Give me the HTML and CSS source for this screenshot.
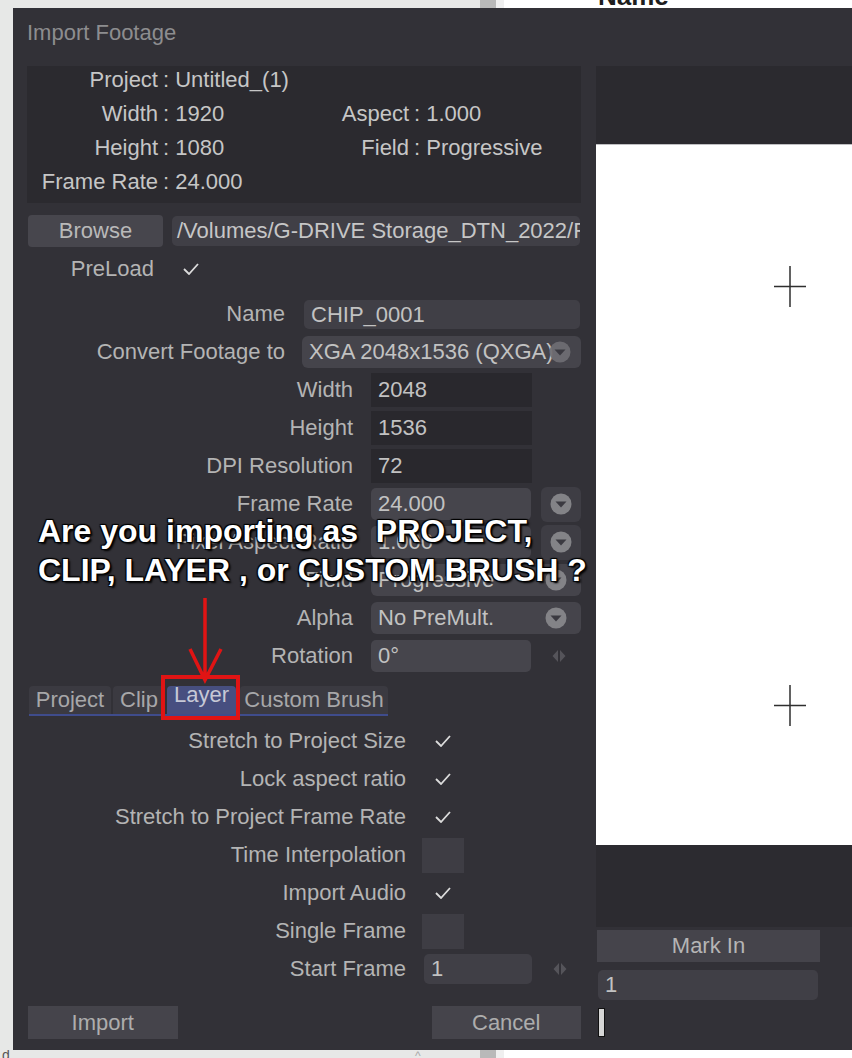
FILE: index.html
```html
<!DOCTYPE html>
<html lang="en">
<head>
    <meta charset="utf-8">
    <title>Import Footage</title>
    <link rel="stylesheet" href="styles.css">
</head>
<body>
<div class="strip">
    <div class="pane"></div>
    <div class="scroll"></div>
    <div class="gap"></div>
    <div class="doc"><span class="doc-head">Name</span></div>
</div>

<div class="middle">
    <div class="gutter"></div>
    <div class="dialog">
        <div class="titlebar">Import Footage</div>
        <div class="dialog-body">
            <div class="left-col">
                <div class="info">
                    <span class="k">Project</span><span class="v">: Untitled_(1)</span><span></span><span></span>
                    <span class="k">Width</span><span class="v">: 1920</span><span class="k">Aspect</span><span class="v">: 1.000</span>
                    <span class="k">Height</span><span class="v">: 1080</span><span class="k">Field</span><span class="v">: Progressive</span>
                    <span class="k">Frame Rate</span><span class="v">: 24.000</span><span></span><span></span>
                </div>

                <div class="browse-row">
                    <div class="btn browse">Browse</div>
                    <div class="path">/Volumes/G-DRIVE Storage_DTN_2022/Footage</div>
                </div>

                <div class="preload-row">
                    <span class="lbl">PreLoad</span>
                    <svg class="check" width="16" height="12" viewBox="0 0 16 12"><polyline points="1,6 6,11 15,1"/></svg>
                </div>

                <div class="form">
                    <div class="row">
                        <span class="lbl lbl-a">Name</span>
                        <div class="input name">CHIP_0001</div>
                    </div>
                    <div class="row">
                        <span class="lbl lbl-a">Convert Footage to</span>
                        <div class="select convert">
                            <span class="sel-text">XGA 2048x1536 (QXGA)</span>
                            <svg class="drop" width="22" height="22" viewBox="0 0 22 22"><circle cx="11" cy="11" r="10.5"/><path d="M5.5 8.5h11l-5.5 6z"/></svg>
                        </div>
                    </div>
                    <div class="row">
                        <span class="lbl lbl-b">Width</span>
                        <div class="input dark">2048</div>
                    </div>
                    <div class="row">
                        <span class="lbl lbl-b">Height</span>
                        <div class="input dark">1536</div>
                    </div>
                    <div class="row">
                        <span class="lbl lbl-b">DPI Resolution</span>
                        <div class="input dark">72</div>
                    </div>
                    <div class="row">
                        <span class="lbl lbl-b">Frame Rate</span>
                        <div class="input short">24.000</div>
                        <div class="drop-btn">
                            <svg class="drop" width="22" height="22" viewBox="0 0 22 22"><circle cx="11" cy="11" r="10.5"/><path d="M5.5 8.5h11l-5.5 6z"/></svg>
                        </div>
                    </div>
                    <div class="row">
                        <span class="lbl lbl-b">Pixel Aspect Ratio</span>
                        <div class="input short">1.000</div>
                        <div class="drop-btn">
                            <svg class="drop" width="22" height="22" viewBox="0 0 22 22"><circle cx="11" cy="11" r="10.5"/><path d="M5.5 8.5h11l-5.5 6z"/></svg>
                        </div>
                    </div>
                    <div class="row">
                        <span class="lbl lbl-b">Field</span>
                        <div class="select wide">
                            <span class="sel-text">Progressive</span>
                            <svg class="drop" width="22" height="22" viewBox="0 0 22 22"><circle cx="11" cy="11" r="10.5"/><path d="M5.5 8.5h11l-5.5 6z"/></svg>
                        </div>
                    </div>
                    <div class="row">
                        <span class="lbl lbl-b">Alpha</span>
                        <div class="select wide">
                            <span class="sel-text">No PreMult.</span>
                            <svg class="drop" width="22" height="22" viewBox="0 0 22 22"><circle cx="11" cy="11" r="10.5"/><path d="M5.5 8.5h11l-5.5 6z"/></svg>
                        </div>
                    </div>
                    <div class="row">
                        <span class="lbl lbl-b">Rotation</span>
                        <div class="input short">0°</div>
                        <svg class="spin" width="14" height="12" viewBox="0 0 14 12"><path d="M6 0v12L0.5 6z M8 0v12l5.5-6z"/></svg>
                    </div>
                </div>

                <div class="tabs">
                    <div class="tab t-project">Project</div>
                    <div class="tab t-clip">Clip</div>
                    <div class="tab t-layer on">Layer</div>
                    <div class="tab t-brush">Custom Brush</div>
                </div>

                <div class="form">
                    <div class="row">
                        <span class="lbl lbl-c">Stretch to Project Size</span>
                        <div class="cb"><svg class="check" width="16" height="12" viewBox="0 0 16 12"><polyline points="1,6 6,11 15,1"/></svg></div>
                    </div>
                    <div class="row">
                        <span class="lbl lbl-c">Lock aspect ratio</span>
                        <div class="cb"><svg class="check" width="16" height="12" viewBox="0 0 16 12"><polyline points="1,6 6,11 15,1"/></svg></div>
                    </div>
                    <div class="row">
                        <span class="lbl lbl-c">Stretch to Project Frame Rate</span>
                        <div class="cb"><svg class="check" width="16" height="12" viewBox="0 0 16 12"><polyline points="1,6 6,11 15,1"/></svg></div>
                    </div>
                    <div class="row">
                        <span class="lbl lbl-c">Time Interpolation</span>
                        <div class="cb off"></div>
                    </div>
                    <div class="row">
                        <span class="lbl lbl-c">Import Audio</span>
                        <div class="cb"><svg class="check" width="16" height="12" viewBox="0 0 16 12"><polyline points="1,6 6,11 15,1"/></svg></div>
                    </div>
                    <div class="row">
                        <span class="lbl lbl-c">Single Frame</span>
                        <div class="cb off"></div>
                    </div>
                    <div class="row">
                        <span class="lbl lbl-c">Start Frame</span>
                        <div class="input start">1</div>
                        <svg class="spin" width="14" height="12" viewBox="0 0 14 12"><path d="M6 0v12L0.5 6z M8 0v12l5.5-6z"/></svg>
                    </div>
                </div>

                <div class="actions">
                    <div class="btn act">Import</div>
                    <div class="btn act cancel">Cancel</div>
                </div>
            </div>

            <div class="right-col">
                <div class="view-top"></div>
                <div class="canvas">
                    <svg class="cross c1" width="32" height="41" viewBox="0 0 32 41"><path d="M0 20.5h32M16 0v41"/></svg>
                    <svg class="cross c2" width="32" height="41" viewBox="0 0 32 41"><path d="M0 20.5h32M16 0v41"/></svg>
                </div>
                <div class="view-bottom"></div>
                <div class="btn mark">Mark In</div>
                <div class="input mark-field">1</div>
                <div class="caret"></div>
            </div>
        </div>

        <!-- annotation drawn over the screenshot -->
        <div class="note">Are you importing as&nbsp; PROJECT,<br>CLIP, LAYER , or CUSTOM BRUSH ?</div>
        <svg class="arrow" width="40" height="96" viewBox="0 0 40 96"><path d="M20 4V86M5 55l15 31 16-31"/></svg>
        <div class="redbox"></div>
    </div>
</div>

<div class="strip bottom">
    <div class="pane"><span class="crumb">d</span><span class="tick">^</span></div>
    <div class="scroll"></div>
    <div class="gap"></div>
    <div class="doc"></div>
</div>
</body>
</html>
```

FILE: styles.css
```css
* {
    box-sizing: border-box;
}
body {
    margin: 0;
    width: 852px;
    height: 1058px;
    overflow: hidden;
    background: #e7e8e7;
    font-family: "Liberation Sans", Arial, sans-serif;
    font-size: 22px;
}

/* window chrome behind the dialog */
.strip {
    display: flex;
    height: 8px;
    overflow: hidden;
}
.strip .pane {
    width: 480px;
    background: #e7e8e7;
    position: relative;
}
.strip .scroll {
    width: 16px;
    background: #b9b9b9;
}
.strip .gap {
    width: 8px;
    background: #efefef;
}
.strip .doc {
    flex: 1;
    background: #fff;
}
.doc-head {
    display: block;
    margin: -17px 0 0 94px;
    font-weight: bold;
    font-size: 26px;
    line-height: 26px;
    color: #1e1e1e;
}
.crumb {
    display: block;
    margin: -2px 0 0 2px;
    font-size: 14px;
    line-height: 14px;
    color: #555;
}
.tick {
    position: absolute;
    left: 415px;
    top: 0;
    font-size: 12px;
    line-height: 12px;
    color: #aaa;
}

.middle {
    display: flex;
    height: 1042px;
}
.gutter {
    width: 13px;
    background: #e7e8e7;
}
.dialog {
    flex: 1;
    position: relative;
    background: #323137;
    color: #b4b4b4;
}
.titlebar {
    height: 58px;
    padding: 14px 0 0 14px;
    line-height: 22px;
    color: #8d8d8f;
}
.dialog-body {
    display: flex;
}
.left-col {
    width: 583px;
    padding: 0 15px 0 14px;
}

/* project info */
.info {
    height: 137px;
    background: #2b2a2f;
    display: grid;
    grid-template-columns: 131px 180px 71px 1fr;
    grid-auto-rows: 28px;
    row-gap: 6px;
    line-height: 28px;
    color: #c6c6c6;
    white-space: nowrap;
}
.info .k {
    text-align: right;
}
.info .v {
    padding-left: 5px;
}

.btn {
    background: #47464d;
    color: #b9b9b9;
    text-align: center;
    border-radius: 4px;
}
.browse-row {
    display: flex;
    align-items: center;
    margin-top: 12px;
    height: 32px;
}
.browse {
    width: 135px;
    height: 32px;
    line-height: 32px;
    margin-left: 1px;
}
.path {
    margin-left: 9px;
    width: 408px;
    height: 30px;
    line-height: 30px;
    padding-left: 5px;
    background: #403f46;
    border-radius: 5px;
    color: #c6c6c6;
    white-space: nowrap;
    overflow: hidden;
}
.preload-row {
    display: flex;
    align-items: center;
    height: 38px;
    margin-top: 3px;
}
.preload-row .lbl {
    width: 127px;
    text-align: right;
}
.preload-row .check {
    margin-left: 29px;
}
.check polyline {
    fill: none;
    stroke: #dcdcdc;
    stroke-width: 1.8;
}

.form {
    margin-top: 7px;
}
.row {
    display: flex;
    align-items: center;
    height: 38px;
}
.lbl {
    text-align: right;
    white-space: nowrap;
    flex-shrink: 0;
}
.lbl-a {
    width: 258px;
}
.lbl-b {
    width: 326px;
    margin-right: 18px;
}
.lbl-c {
    width: 379px;
    margin-right: 16px;
}

.input {
    background: #403f46;
    border-radius: 5px;
    color: #c2c2c2;
    padding-left: 7px;
    white-space: nowrap;
}
.input.name {
    margin-left: 19px;
    width: 276px;
    height: 29px;
    line-height: 29px;
}
.input.dark {
    width: 161px;
    height: 34px;
    line-height: 34px;
    background: #29282d;
    border-radius: 0;
}
.input.short {
    width: 160px;
    height: 32px;
    line-height: 32px;
    background: #46454c;
}
.select {
    display: flex;
    align-items: center;
    height: 32px;
    background: #45444b;
    border-radius: 6px;
    color: #c2c2c2;
    padding: 0 14px 0 7px;
}
.select.convert {
    margin-left: 17px;
    width: 279px;
    padding-right: 10px;
}
.select.wide {
    width: 210px;
}
.sel-text {
    flex: 1 1 0;
    min-width: 0;
    white-space: nowrap;
}
.drop {
    flex-shrink: 0;
}
.drop circle {
    fill: #838387;
}
.drop path {
    fill: #3b3a41;
}
.convert .sel-text {
    margin-right: -10px;
}
.convert .drop circle {
    fill: #6f6e73;
    opacity: 0.92;
}
.drop-btn {
    margin-left: 10px;
    width: 40px;
    height: 35px;
    background: #3e3d44;
    border-radius: 6px;
    display: flex;
    align-items: center;
    justify-content: center;
}
.spin {
    margin-left: 21px;
}
.spin path {
    fill: #55545a;
}

/* tabs */
.tabs {
    display: flex;
    align-items: flex-end;
    gap: 2px;
    margin: 11px 0 0 2px;
    width: 359px;
    height: 30px;
    border-bottom: 2px solid #3f4c8c;
}
.tab {
    height: 28px;
    line-height: 28px;
    text-align: center;
    background: #3b3a41;
    border-radius: 4px 4px 0 0;
    color: #a7a7a9;
    white-space: nowrap;
}
.t-project { width: 82px; }
.t-clip { width: 52px; }
.t-layer { width: 69px; }
.t-brush { width: 148px; margin-left: 2px; }
.tab.on {
    background: #474f80;
    color: #c6c8d6;
    line-height: 17px;
}

.tabs + .form {
    margin-top: 6px;
}
.cb {
    width: 42px;
    height: 35px;
    display: flex;
    align-items: center;
    justify-content: center;
}
.cb.off {
    background: #3e3d44;
}
.input.start {
    margin-left: 2px;
    width: 108px;
    height: 30px;
    line-height: 30px;
}

.actions {
    display: flex;
    margin-top: 18px;
}
.btn.act {
    width: 150px;
    height: 33px;
    line-height: 33px;
    border-radius: 0;
    background: #45444b;
    color: #adadad;
    margin-left: 1px;
}
.btn.cancel {
    margin-left: 254px;
}

/* preview side */
.right-col {
    flex: 1;
}
.view-top {
    height: 78px;
    background: #2b2a2f;
}
.canvas {
    position: relative;
    height: 701px;
    background: #fff;
    border-top: 1px solid #bfbfc2;
}
.cross {
    position: absolute;
    left: 178px;
}
.cross path {
    stroke: #2f2f2f;
    stroke-width: 1.5;
}
.c1 { top: 121px; }
.c2 { top: 540px; }
.view-bottom {
    height: 82px;
    background: #2c2b30;
}
.btn.mark {
    margin: 3px 0 0 1px;
    width: 223px;
    height: 32px;
    line-height: 32px;
    border-radius: 0;
    background: #45444b;
    color: #b5b5b5;
}
.mark-field {
    margin: 8px 0 0 2px;
    width: 220px;
    height: 30px;
    line-height: 30px;
}
.caret {
    margin: 8px 0 0 2px;
    width: 7px;
    height: 29px;
    background: #d6d6d6;
    border: 1px solid #111;
}

/* annotation */
.note {
    position: absolute;
    left: 25px;
    top: 504px;
    font-weight: bold;
    font-size: 32px;
    line-height: 39px;
    color: #fff;
    white-space: nowrap;
    text-shadow: 2px 2px 2px #000, -1px -1px 1px #000, 1px -1px 1px #000, -1px 1px 1px #000;
}
.arrow {
    position: absolute;
    left: 172px;
    top: 586px;
}
.arrow path {
    fill: none;
    stroke: #e01414;
    stroke-width: 3.5;
}
.redbox {
    position: absolute;
    left: 148px;
    top: 667px;
    width: 79px;
    height: 45px;
    border: 4px solid #e01414;
}
```
